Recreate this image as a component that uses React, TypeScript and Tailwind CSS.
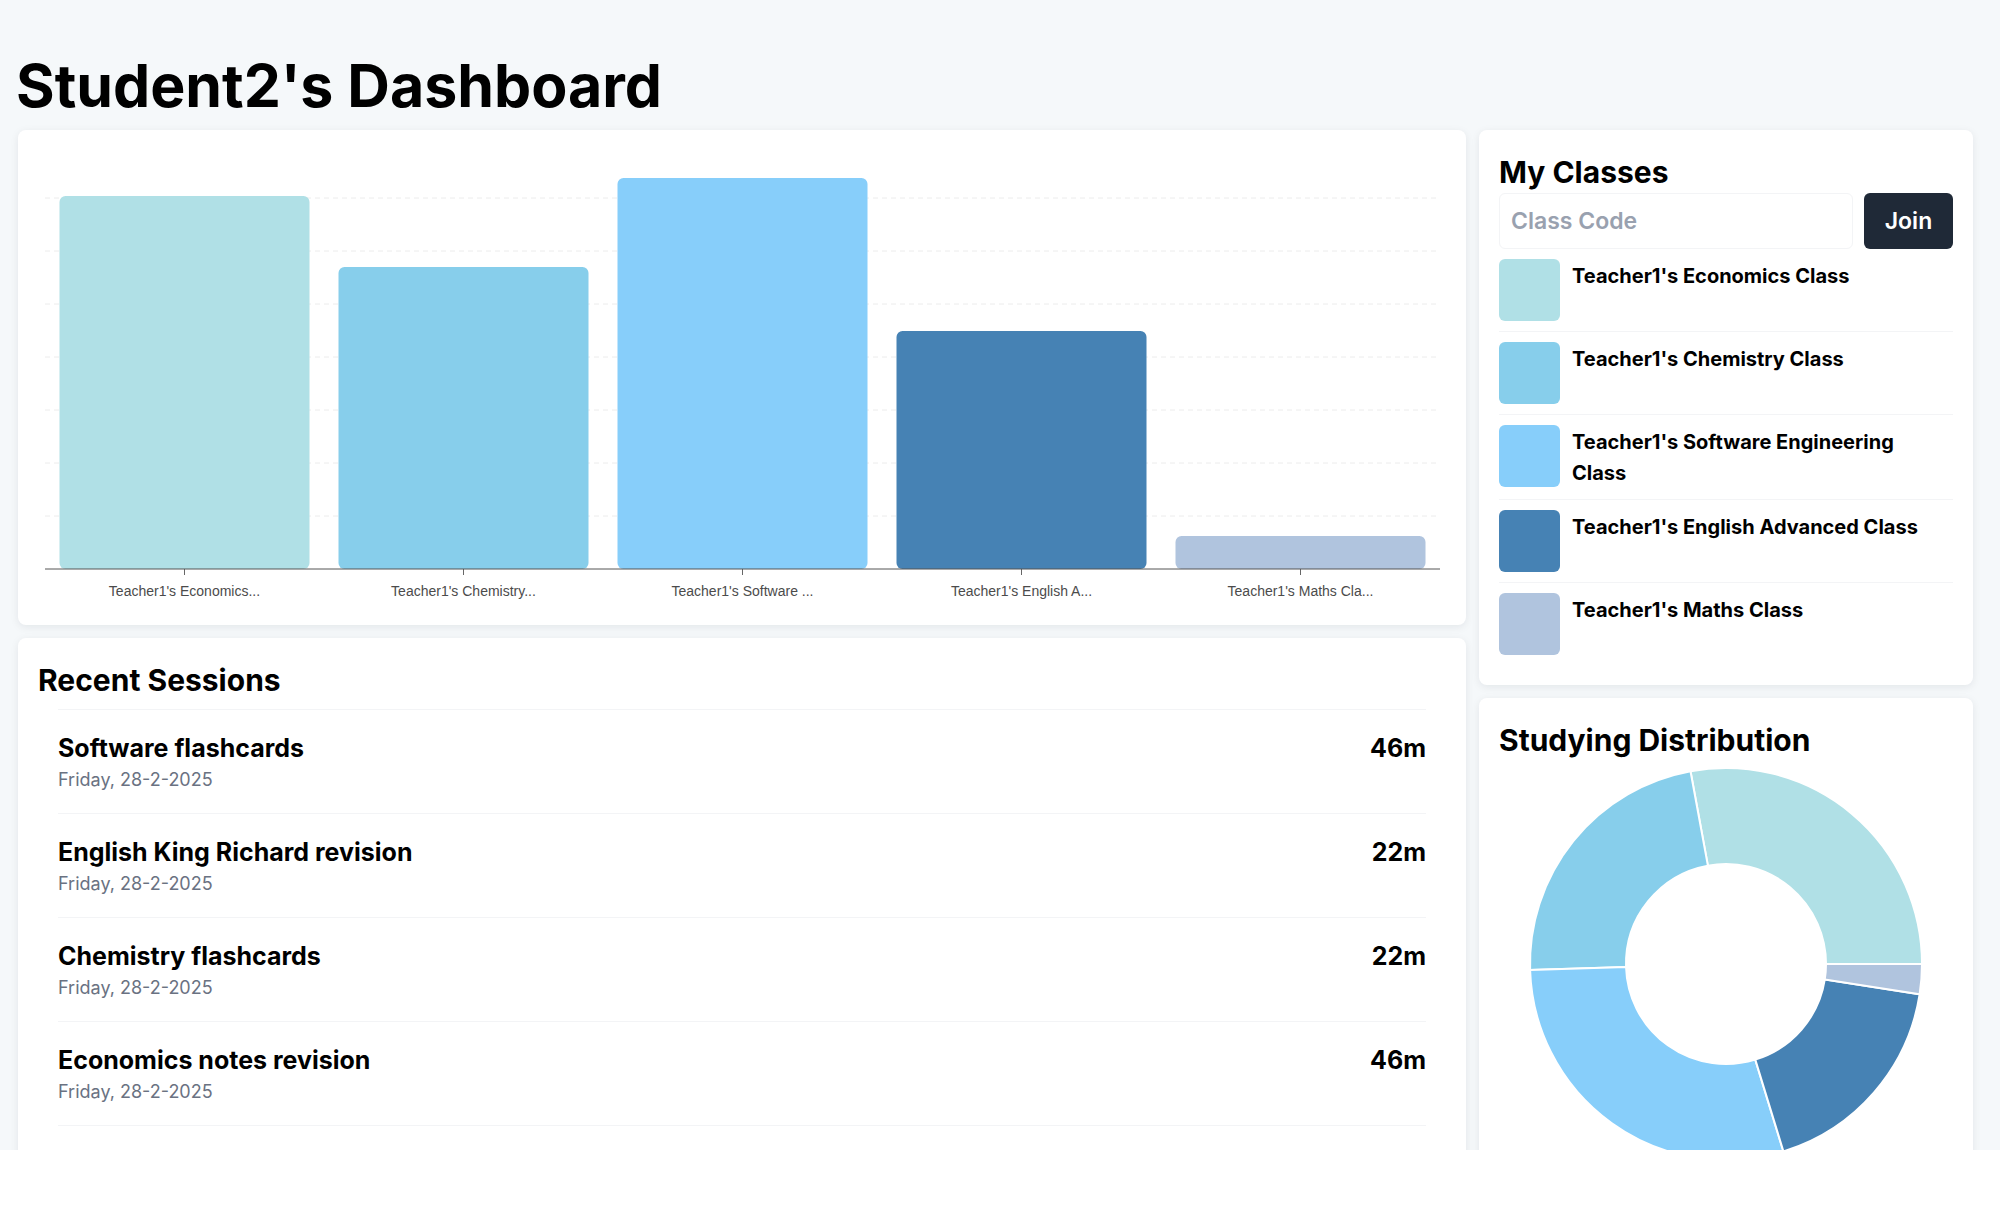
import React from "react";

const classes = [
  { name: "Teacher1's Economics Class", short: "Teacher1's Economics...", color: "#b0e0e6", value: 373 },
  { name: "Teacher1's Chemistry Class", short: "Teacher1's Chemistry...", color: "#87ceeb", value: 302 },
  { name: "Teacher1's Software Engineering Class", short: "Teacher1's Software ...", color: "#87cefa", value: 391 },
  { name: "Teacher1's English Advanced Class", short: "Teacher1's English A...", color: "#4682b4", value: 238 },
  { name: "Teacher1's Maths Class", short: "Teacher1's Maths Cla...", color: "#b0c4de", value: 33 },
];

const sessions = [
  { title: "Software flashcards", date: "Friday, 28-2-2025", mins: "46m" },
  { title: "English King Richard revision", date: "Friday, 28-2-2025", mins: "22m" },
  { title: "Chemistry flashcards", date: "Friday, 28-2-2025", mins: "22m" },
  { title: "Economics notes revision", date: "Friday, 28-2-2025", mins: "46m" },
];

function BarChartCard() {
  const left = 27, right = 1422, axisY = 439;
  const band = (right - left) / classes.length;
  const barW = 250;
  return (
    <div className="h-[495px] rounded-lg bg-white shadow-[0_2px_8px_rgba(15,23,42,0.08)]">
      <svg width="1448" height="495" viewBox="0 0 1448 495">
        {[1, 2, 3, 4, 5, 6, 7].map((k) => (
          <line key={k} x1={left} x2={1418} y1={axisY - 53 * k} y2={axisY - 53 * k} stroke="#ececec" strokeDasharray="5 4" />
        ))}
        {classes.map((c, i) => {
          const cx = left + band * (i + 0.5);
          return (
            <g key={c.name}>
              <rect x={cx - barW / 2} y={axisY - c.value} width={barW} height={c.value} rx={6} fill={c.color} />
              <line x1={cx} x2={cx} y1={axisY} y2={axisY + 6} stroke="#666" />
              <text x={cx} y={axisY + 27} textAnchor="middle" fontSize="14" fill="#4b4b4b" fontFamily="'Liberation Sans', Arial, sans-serif">
                {c.short}
              </text>
            </g>
          );
        })}
        <line x1={left} x2={right} y1={axisY} y2={axisY} stroke="#555" />
      </svg>
    </div>
  );
}

function RecentSessions() {
  return (
    <div className="rounded-lg bg-white px-5 pt-6 pb-12 shadow-[0_2px_8px_rgba(15,23,42,0.08)]">
      <h2 className="text-[30px] leading-9 font-bold text-black">Recent Sessions</h2>
      <div className="mx-5 mt-[11px] border-t border-gray-100">
        {sessions.map((s) => (
          <div key={s.title} className="flex justify-between border-b border-gray-100 pt-[22px] pb-[19px]">
            <div>
              <p className="text-[25px] leading-8 font-bold text-black">{s.title}</p>
              <p className="mt-[2px] text-lg leading-7 text-gray-500">{s.date}</p>
            </div>
            <p className="text-[25px] leading-8 font-bold text-black">{s.mins}</p>
          </div>
        ))}
      </div>
    </div>
  );
}

function MyClasses() {
  return (
    <div className="rounded-lg bg-white px-5 pt-6 pb-5 shadow-[0_2px_8px_rgba(15,23,42,0.08)]">
      <h2 className="text-[30px] leading-9 font-bold text-black">My Classes</h2>
      <div className="mt-[3px] flex gap-[11px]">
        <input
          placeholder="Class Code"
          className="h-[56px] min-w-0 flex-1 rounded-md border border-gray-100 px-[11px] text-[23px] font-semibold placeholder:text-gray-400 outline-none"
        />
        <button className="h-[56px] w-[89px] shrink-0 rounded-md bg-[#1f2937] text-[23px] font-semibold text-white">Join</button>
      </div>
      <div className="divide-y divide-gray-100">
        {classes.map((c) => (
          <div key={c.name} className="flex items-start gap-3 py-[10px]">
            <div className="h-[62px] w-[61px] shrink-0 rounded-md" style={{ backgroundColor: c.color }} />
            <p className="pt-[2px] pr-2 text-xl leading-[31px] font-bold text-black">{c.name}</p>
          </div>
        ))}
      </div>
    </div>
  );
}

function Donut() {
  const cx = 227, cy = 206, ro = 196, ri = 100;
  const total = classes.reduce((a, c) => a + c.value, 0);
  let start = 0;
  const pt = (r: number, a: number) => [cx + r * Math.cos(a), cy - r * Math.sin(a)];
  return (
    <svg width="454" height="412" viewBox="0 0 454 412">
      {classes.map((c) => {
        const a0 = start;
        const a1 = start + (c.value / total) * Math.PI * 2;
        start = a1;
        const large = a1 - a0 > Math.PI ? 1 : 0;
        const [x0, y0] = pt(ro, a0);
        const [x1, y1] = pt(ro, a1);
        const [x2, y2] = pt(ri, a1);
        const [x3, y3] = pt(ri, a0);
        const d = `M${x0},${y0} A${ro},${ro} 0 ${large} 0 ${x1},${y1} L${x2},${y2} A${ri},${ri} 0 ${large} 1 ${x3},${y3} Z`;
        return <path key={c.name} d={d} fill={c.color} stroke="#fff" strokeWidth={2} />;
      })}
    </svg>
  );
}

function Distribution() {
  return (
    <div className="rounded-lg bg-white px-5 pt-6 pb-5 shadow-[0_2px_8px_rgba(15,23,42,0.08)]">
      <h2 className="text-[30px] leading-9 font-bold text-black">Studying Distribution</h2>
      <Donut />
    </div>
  );
}

export default function App() {
  return (
    <div className="min-h-screen bg-white font-['Inter','Liberation_Sans',sans-serif]">
      <div className="h-[1150px] overflow-hidden bg-[#f5f8fa] pt-[56px] pr-[27px] pl-[18px]">
        <h1 className="mb-[14px] -ml-[2px] text-[59px] leading-[60px] font-bold text-black">Student2's Dashboard</h1>
        <div className="grid grid-cols-[1448px_494px] gap-[13px]">
          <div className="flex flex-col gap-[13px]">
            <BarChartCard />
            <RecentSessions />
          </div>
          <div className="flex flex-col gap-[13px]">
            <MyClasses />
            <Distribution />
          </div>
        </div>
      </div>
    </div>
  );
}
